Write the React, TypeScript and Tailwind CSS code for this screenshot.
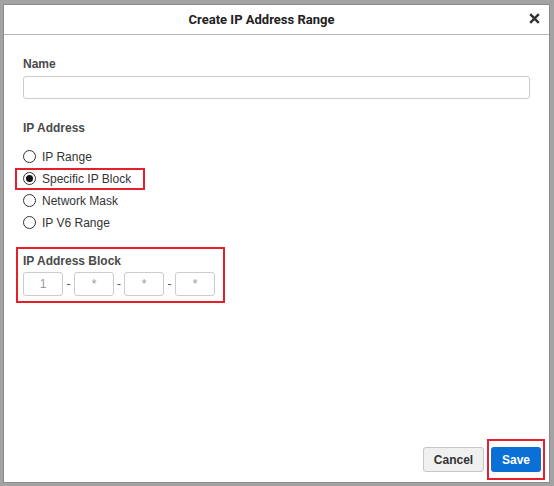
import { useState } from 'react';

const ranges = ['IP Range', 'Specific IP Block', 'Network Mask', 'IP V6 Range'];

export default function App() {
  const [kind, setKind] = useState('Specific IP Block');

  return (
    <div className="w-[554px] h-[486px] bg-[#a3a3a3] pt-[4px] pl-[3px] font-['Liberation_Sans',Arial,sans-serif]">
      <div className="w-[547px] h-[479px] bg-white border border-[#8c8c8c] flex flex-col">
        <div className="h-[30px] shrink-0 flex items-center justify-center relative pr-[30px] border-b border-[#b5b5b5]">
          <span className="font-['Roboto',sans-serif] text-[13px] font-bold text-[#222]">Create IP Address Range</span>
          <button className="absolute right-[9px] top-[8px] text-[#333]">
            <svg width="11" height="11" viewBox="0 0 11 11">
              <path d="M1.2 1.2 L9.8 9.8 M9.8 1.2 L1.2 9.8" stroke="currentColor" strokeWidth="2.5" />
            </svg>
          </button>
        </div>

        <div className="flex-1 px-[19px] pt-[20px]">
          <label className="block text-[12px] font-bold text-[#4a4a4a]">Name</label>
          <input className="mt-[3px] w-[507px] h-[23px] rounded-[3px] border border-[#cccccc] outline-none" />

          <div className="mt-[19px] text-[12px] font-bold text-[#4a4a4a]">IP Address</div>

          <div className="mt-[9px] flex flex-col">
            {ranges.map((r) => {
              const on = kind === r;
              const box = r === 'Specific IP Block';
              return (
                <div key={r} className={box ? '-ml-[8px] w-[130px] h-[22px] border-2 border-[#e5202a] flex items-center pl-[6px]' : 'h-[22px] flex items-center'}>
                  <button onClick={() => setKind(r)} className="flex items-center gap-[6px] text-[12px] text-[#333]">
                    <span className="w-[13px] h-[13px] rounded-full border border-[#333] bg-white flex items-center justify-center">
                      {on && <span className="w-[7px] h-[7px] rounded-full bg-[#111]" />}
                    </span>
                    {r}
                  </button>
                </div>
              );
            })}
          </div>

          <div className="mt-[13px] -ml-[7px] w-[209px] h-[56px] border-2 border-[#e5202a] pl-[5px] pt-[5px]">
            <div className="text-[12px] font-bold text-[#4a4a4a] leading-[14px]">IP Address Block</div>
            <div className="mt-[4px] flex items-center text-[12px] text-[#555]">
              <input defaultValue="1" className="w-[40px] h-[24px] rounded-[3px] border border-[#cccccc] text-center text-[#999] outline-none" />
              <span className="w-[11px] text-center">-</span>
              <input placeholder="*" className="w-[40px] h-[24px] rounded-[3px] border border-[#cccccc] text-center placeholder:text-[#999] outline-none" />
              <span className="w-[10px] text-center">-</span>
              <input placeholder="*" className="w-[40px] h-[24px] rounded-[3px] border border-[#cccccc] text-center placeholder:text-[#999] outline-none" />
              <span className="w-[11px] text-center">-</span>
              <input placeholder="*" className="w-[40px] h-[24px] rounded-[3px] border border-[#cccccc] text-center placeholder:text-[#999] outline-none" />
            </div>
          </div>
        </div>

        <div className="h-[45px] shrink-0 flex items-center justify-end pr-[4px] gap-[3px]">
          <button className="w-[61px] h-[25px] rounded-[3px] border border-[#c6c6c6] bg-[#f0f0f0] text-[12px] font-bold text-[#333]">Cancel</button>
          <div className="w-[58px] h-[41px] border-2 border-[#e5202a] flex items-center justify-center">
            <button className="w-[50px] h-[25px] rounded-[3px] bg-[#0a70d6] text-[12px] font-bold text-white">Save</button>
          </div>
        </div>
      </div>
    </div>
  );
}
